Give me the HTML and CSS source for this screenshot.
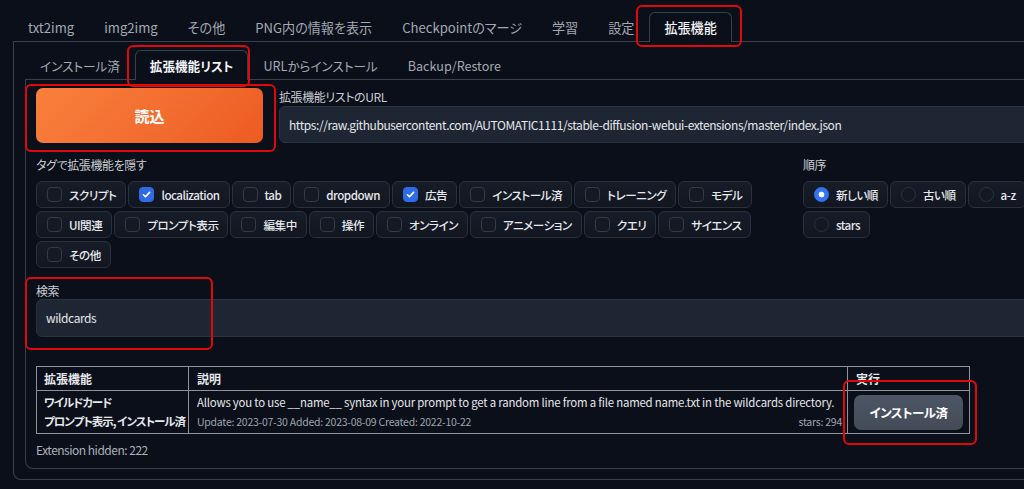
FILE: index.html
```html
<!DOCTYPE html>
<html lang="ja">
<head>
<meta charset="utf-8">
<title>拡張機能</title>
<link rel="stylesheet" href="styles.css">
</head>
<body>
<div class="app">
  <div class="tabs outer">
    <div class="tab-nav top-nav">
      <button class="tab">txt2img</button>
      <button class="tab">img2img</button>
      <button class="tab">その他</button>
      <button class="tab">PNG内の情報を表示</button>
      <button class="tab">Checkpointのマージ</button>
      <button class="tab">学習</button>
      <button class="tab">設定</button>
      <button class="tab sel top-sel">拡張機能</button>
    </div>
    <div class="panel outer-panel">
      <div class="tab-nav inner-nav">
        <button class="tab">インストール済</button>
        <button class="tab sel inner-sel">拡張機能リスト</button>
        <button class="tab">URLからインストール</button>
        <button class="tab">Backup/Restore</button>
      </div>
      <div class="panel inner-panel">
        <div class="load-row">
          <button class="load-btn">読込</button>
          <div class="field url-field">
            <div class="label">拡張機能リストのURL</div>
            <div class="input url-input">https://raw.githubusercontent.com/AUTOMATIC1111/stable-diffusion-webui-extensions/master/index.json</div>
          </div>
        </div>
        <div class="filter-row">
          <div class="tags">
            <div class="label">タグで拡張機能を隠す</div>
            <div class="chip-rows">
              <div class="chip-row">
                <label class="chip"><span class="box"></span>スクリプト</label>
                <label class="chip"><span class="box on"><svg viewBox="0 0 16 16"><path d="M4.2 8.3l2.6 2.5 5-5.4"/></svg></span>localization</label>
                <label class="chip"><span class="box"></span>tab</label>
                <label class="chip"><span class="box"></span>dropdown</label>
                <label class="chip"><span class="box on"><svg viewBox="0 0 16 16"><path d="M4.2 8.3l2.6 2.5 5-5.4"/></svg></span>広告</label>
                <label class="chip"><span class="box"></span>インストール済</label>
                <label class="chip"><span class="box"></span>トレーニング</label>
                <label class="chip"><span class="box"></span>モデル</label>
              </div>
              <div class="chip-row">
                <label class="chip"><span class="box"></span>UI関連</label>
                <label class="chip"><span class="box"></span>プロンプト表示</label>
                <label class="chip"><span class="box"></span>編集中</label>
                <label class="chip"><span class="box"></span>操作</label>
                <label class="chip"><span class="box"></span>オンライン</label>
                <label class="chip"><span class="box"></span>アニメーション</label>
                <label class="chip"><span class="box"></span>クエリ</label>
                <label class="chip"><span class="box"></span>サイエンス</label>
              </div>
              <div class="chip-row">
                <label class="chip"><span class="box"></span>その他</label>
              </div>
            </div>
          </div>
          <div class="order">
            <div class="label">順序</div>
            <div class="chip-rows">
              <div class="chip-row">
                <label class="chip"><span class="radio on"></span>新しい順</label>
                <label class="chip"><span class="radio"></span>古い順</label>
                <label class="chip"><span class="radio"></span>a-z</label>
              </div>
              <div class="chip-row">
                <label class="chip"><span class="radio"></span>stars</label>
              </div>
            </div>
          </div>
        </div>
        <div class="field search-field">
          <div class="label">検索</div>
          <div class="input search-input">wildcards</div>
        </div>
        <table class="ext-table">
          <colgroup><col class="c1"><col class="c2"><col class="c3"></colgroup>
          <thead>
            <tr><th>拡張機能</th><th>説明</th><th class="act-h">実行</th></tr>
          </thead>
          <tbody>
            <tr>
              <td class="name"><div>ワイルドカード</div><div>プロンプト表示, インストール済</div></td>
              <td class="desc"><div>Allows you to use __name__ syntax in your prompt to get a random line from a file named name.txt in the wildcards directory.</div><div class="meta"><span>Update: 2023-07-30 Added: 2023-08-09 Created: 2022-10-22</span><span>stars: 294</span></div></td>
              <td class="act"><button class="inst-btn">インストール済</button></td>
            </tr>
          </tbody>
        </table>
        <p class="hidden-count">Extension hidden: 222</p>
      </div>
    </div>
  </div>
  <div class="mark m1"></div>
  <div class="mark m2"></div>
  <div class="mark m3"></div>
  <div class="mark m4"></div>
  <div class="mark m5"></div>
</div>
</body>
</html>
```
FILE: styles.css
```css
* { box-sizing: border-box; }
html, body {
  margin: 0;
  background: #0b0f19;
  overflow: hidden;
}
body {
  width: 1024px;
  height: 489px;
  font-family: "Noto Sans CJK JP", "Noto Sans", sans-serif;
  font-feature-settings: "palt";
  color: #e5e7eb;
}
button { font-family: inherit; font-feature-settings: inherit; cursor: pointer; }

.app {
  position: relative;
  padding: 12px 0 0 13px;
  width: 1100px;
}
.outer { width: 1050px; }

.tab-nav {
  display: flex;
  border-bottom: 1px solid #374151;
}
.tab {
  height: 30px;
  margin-bottom: -1px;
  padding: 0 14px;
  border: 1px solid transparent;
  border-bottom: none;
  border-radius: 6px 6px 0 0;
  background: none;
  color: #a3a9b2;
  line-height: 28px;
  white-space: nowrap;
}
.top-nav .tab { font-size: 13.1px; }
.inner-nav .tab { font-size: 12.6px; }
.tab.sel {
  border-color: #374151;
  background: #0b0f19;
  color: #f3f4f6;
}
.top-sel { font-weight: 500; }
.inner-sel { font-weight: 700; }

.panel {
  border: 1px solid #374151;
  border-top: none;
  border-radius: 0 0 8px 8px;
}
.outer-panel { padding: 8px 11px 10px; }
.inner-panel { padding: 8px 10px 10px; }

.label {
  font-size: 12px;
  letter-spacing: -0.4px;
  line-height: 17px;
  color: #c9cdd3;
}

.load-row {
  display: flex;
  gap: 16px;
}
.load-btn {
  width: 227px;
  height: 55px;
  border: none;
  border-radius: 7px;
  background: linear-gradient(135deg, #f9803d 0%, #f26b2e 60%, #ec5a22 100%);
  color: #fff;
  font-size: 15px;
  font-weight: 700;
}
.field { flex: 1; }
.input {
  background: #1f2633;
  border: 1px solid #2b3341;
  border-radius: 6px;
  color: #e5e7eb;
  font-size: 12px;
  letter-spacing: -0.42px;
  padding: 0 9px;
  white-space: nowrap;
}
.url-input { margin-top: 1px; height: 37px; line-height: 35px; }

.filter-row {
  display: flex;
  gap: 15px;
  margin-top: 13px;
}
.tags { width: 752px; }
.order { width: 237px; }
.chip-rows {
  display: flex;
  flex-direction: column;
  gap: 3px;
  margin-top: 8px;
}
.chip-row {
  display: flex;
  gap: 2px;
}
.chip {
  display: inline-flex;
  align-items: center;
  gap: 7px;
  height: 27px;
  padding: 0 9px 0 10px;
  border: 1px solid #2a313d;
  border-radius: 6px;
  background: linear-gradient(#171d28, #111621);
  font-size: 11.6px;
  font-weight: 500;
  letter-spacing: -0.5px;
  color: #e6e8ec;
  white-space: nowrap;
}
.box {
  width: 15px;
  height: 15px;
  border: 1px solid #333b48;
  border-radius: 4px;
  background: #141924;
  display: flex;
  align-items: center;
  justify-content: center;
}
.box.on { background: #2f6be6; border-color: #2f6be6; }
.box svg { width: 13px; height: 13px; fill: none; stroke: #fff; stroke-width: 2; stroke-linecap: round; stroke-linejoin: round; }
.radio {
  width: 15px;
  height: 15px;
  border: 1px solid #2c333f;
  border-radius: 50%;
  background: #131823;
}
.radio.on {
  border-color: #3574f0;
  background: radial-gradient(circle, #fff 0 2.6px, #3574f0 3.2px);
}

.search-field { margin-top: 14px; }
.search-input { height: 38px; line-height: 36px; }

.ext-table {
  margin-top: 29px;
  border-collapse: collapse;
  table-layout: fixed;
  width: 933px;
  border: 1px solid #8e939b;
}
.c1 { width: 152px; }
.c2 { width: 659px; }
.c3 { width: 122px; }
.ext-table th, .ext-table td {
  border: 1px solid #8e939b;
  text-align: left;
  white-space: nowrap;
}
.ext-table th {
  height: 24px;
  padding: 0 8px;
  font-size: 12px;
  font-weight: 700;
  line-height: 22px;
}
.ext-table th:first-child { padding-left: 7px; }
.ext-table td { height: 43px; padding: 2px 5px 2px 8px; line-height: 19px; vertical-align: middle; }
.ext-table td.name {
  padding-left: 7px;
  font-size: 11.5px;
  letter-spacing: -1px;
  font-weight: 700;
}
.desc { font-size: 11.4px; letter-spacing: -0.2px; }
.meta {
  display: flex;
  justify-content: space-between;
  font-size: 10.5px;
  letter-spacing: -0.25px;
  color: #9ca3af;
}
.ext-table td.act { padding: 0 6px; }
.inst-btn {
  width: 109px;
  height: 35px;
  border: none;
  border-radius: 7px;
  background: linear-gradient(#4d5665, #434b58);
  color: #fff;
  font-size: 12.5px;
  letter-spacing: -0.5px;
  font-weight: 700;
}

.hidden-count {
  margin: 7px 0 0;
  font-size: 12px;
  letter-spacing: -0.5px;
  line-height: 17px;
  color: #aab0b8;
}

.mark {
  position: absolute;
  border: 2px solid #e0080b;
  border-radius: 6px;
}
.m1 { left: 636px; top: 5px; width: 106px; height: 42px; }
.m2 { left: 127px; top: 45px; width: 123px; height: 42px; }
.m3 { left: 25px; top: 84px; width: 251px; height: 68px; }
.m4 { left: 25px; top: 277px; width: 188px; height: 73px; }
.m5 { left: 843px; top: 380px; width: 134px; height: 65px; }
```
